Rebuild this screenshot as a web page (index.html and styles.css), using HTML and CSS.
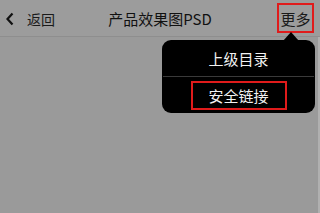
FILE: index.html
```html
<!DOCTYPE html>
<html>
<head>
<meta charset="utf-8">
<link rel="stylesheet" href="styles.css">
</head>
<body>
<div class="screen">
  <header class="nav">
    <div class="back">
      <svg class="chev" width="10" height="14" viewBox="0 0 10 14"><path d="M7.5 1.5 L2.5 7 L7.5 12.5" fill="none" stroke="#111" stroke-width="2.2"/></svg>
      <span class="back-text">返回</span>
    </div>
    <div class="title">产品效果图PSD</div>
    <div class="more">更多</div>
  </header>
  <div class="content"></div>
  <div class="menu">
    <div class="arrow"></div>
    <div class="item">上级目录</div>
    <div class="divider"></div>
    <div class="item"><span class="hl">安全链接</span></div>
  </div>
  <div class="edge"></div>
</div>
</body>
</html>
```
FILE: styles.css
```css
html, body { margin: 0; padding: 0; }
body {
  width: 320px; height: 213px; overflow: hidden;
  background: #9a9a9a;
  font-family: "Noto Sans CJK SC", "Liberation Sans", sans-serif;
}
.screen { position: relative; width: 320px; height: 213px; display: flex; flex-direction: column; }
.nav {
  height: 36px; flex: none;
  display: flex; align-items: center;
  border-bottom: 1px solid #8e8e8e;
  background: #9c9c9c;
  position: relative;
}
.back { display: flex; align-items: center; padding-left: 5px; margin-top: 2px; }
.chev { display: block; }
.back-text { margin-left: 12px; font-size: 14px; color: #1a1a1a; line-height: 1; }
.title {
  position: absolute; left: 0; right: 0; text-align: center;
  font-size: 15px; color: #111; line-height: 1; top: 11px;
  pointer-events: none;
}
.more {
  margin-left: auto; margin-right: 6px;
  width: 33px; height: 26px;
  border: 2px solid #e01b1b;
  font-size: 15px; color: #1a1a1a;
  display: flex; align-items: center; justify-content: center;
}
.content { flex: 1; background: #9a9a9a; }
.edge { position: absolute; right: 0; top: 37px; bottom: 0; width: 2px; background: #b0b0b0; }
.menu {
  position: absolute; left: 162px; top: 40px; width: 153px; height: 73px;
  background: #000; border-radius: 9px;
  display: flex; flex-direction: column;
}
.arrow {
  position: absolute; left: 121px; top: -8px; width: 0; height: 0;
  border-left: 8px solid transparent; border-right: 8px solid transparent;
  border-bottom: 9px solid #000;
}
.item {
  height: 36px; display: flex; align-items: center; justify-content: center;
  color: #f2f2f2; font-size: 15px; line-height: 1;
}
.divider { height: 1px; background: #3a3a3a; margin: 0 1px; }
.hl {
  width: 92px; height: 25px; border: 2px solid #e01b1b;
  display: flex; align-items: center; justify-content: center;
}
```
